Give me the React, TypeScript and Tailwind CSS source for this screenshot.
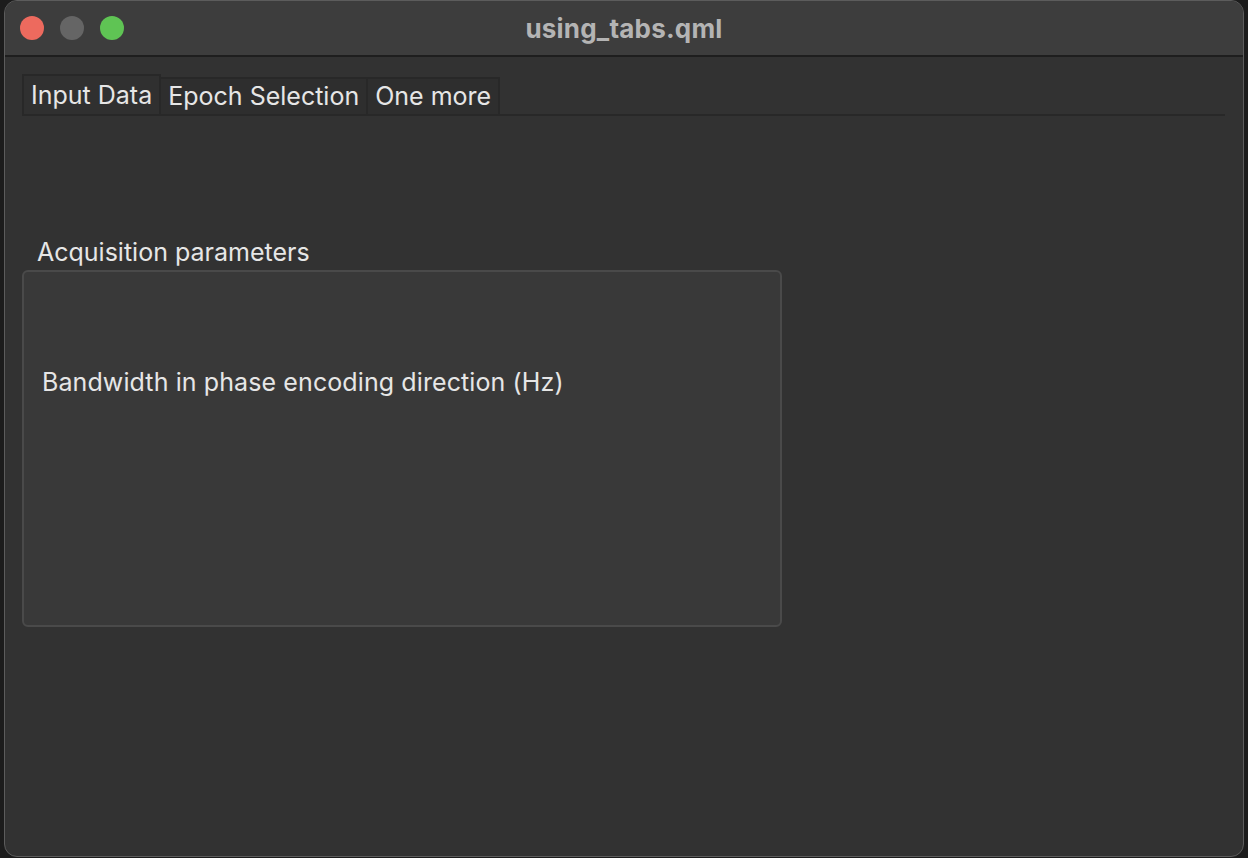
import React from "react";

const tabs = ["Input Data", "Epoch Selection", "One more"];

const TrafficLights = () => (
    <div className="flex items-center gap-[16px] pl-[15px]">
        <div className="w-[24px] h-[24px] rounded-full bg-[#ed6a5e]" />
        <div className="w-[24px] h-[24px] rounded-full bg-[#656565]" />
        <div className="w-[24px] h-[24px] rounded-full bg-[#5fc454]" />
    </div>
);

export default function App() {
    return (
        <div
            className="w-[1248px] h-[858px] bg-[#1c1c1c] pl-[4px] pr-[4px] pb-[1px]"
            style={{ fontFamily: "Inter, 'Noto Sans', sans-serif" }}
        >
            <div className="h-full rounded-[13px] border border-[#5c5c5c] overflow-hidden flex flex-col bg-[#323232]">
                {/* title bar */}
                <div className="relative h-[56px] shrink-0 bg-[#3d3d3d] border-b-2 border-[#1e1e1e] flex items-center">
                    <TrafficLights />
                    <div className="absolute inset-0 flex items-center justify-center pointer-events-none">
                        <span className="text-[26px] font-bold text-[#b4b4b4] tracking-[0.2px]">using_tabs.qml</span>
                    </div>
                </div>

                {/* content */}
                <div className="flex-1 px-[17px] pt-[17px]">
                    <div className="flex items-end border-b-2 border-[#282828] mr-[1px]">
                        {tabs.map((t, i) => (
                            <div
                                key={t}
                                className={`px-[7px] border-2 border-b-0 border-[#282828] text-[25px] text-[#e6e6e6] leading-none flex items-center ${
                                    i === 0 ? "h-[40px] bg-[#303030]" : "h-[37px] bg-[#2e2e2e] -ml-[2px]"
                                }`}
                            >
                                {t}
                            </div>
                        ))}
                    </div>

                    <div className="mt-[124px] w-[760px]">
                        <div className="pl-[15px] text-[25px] text-[#e6e6e6] leading-none mb-[5px]">Acquisition parameters</div>
                        <div className="h-[357px] rounded-[6px] border-2 border-[#4a4a4a] bg-[#393939] pl-[18px] pt-[98px]">
                            <div className="text-[25px] text-[#e6e6e6] leading-none tracking-[0.1px]">
                                Bandwidth in phase encoding direction (Hz)
                            </div>
                        </div>
                    </div>
                </div>
            </div>
        </div>
    );
}
